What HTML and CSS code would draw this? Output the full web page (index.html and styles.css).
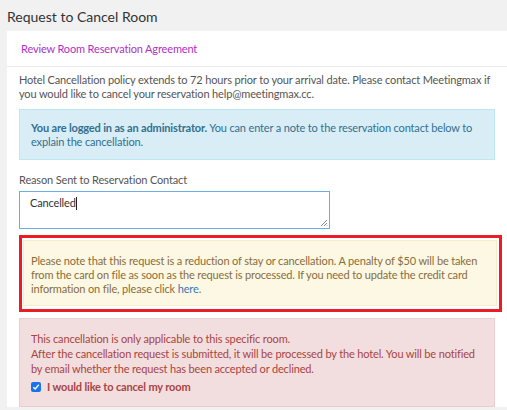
FILE: index.html
```html
<!DOCTYPE html>
<html lang="en">
<head>
<meta charset="utf-8">
<title>Request to Cancel Room</title>
<link rel="stylesheet" href="styles.css">
</head>
<body>
<div class="page">
  <h1 class="title">Request to Cancel Room</h1>
  <div class="panel">
    <div class="panel-head">
      <a class="agreement" href="#">Review Room Reservation Agreement</a>
    </div>
    <div class="panel-body">
      <p class="policy">Hotel Cancellation policy extends to 72 hours prior to your arrival date. Please contact Meetingmax if you would like to cancel your reservation help@meetingmax.cc.</p>
      <div class="alert alert-info"><strong>You are logged in as an administrator.</strong> You can enter a note to the reservation contact below to explain the cancellation.</div>
      <label class="field-label">Reason Sent to Reservation Contact</label>
      <div class="field">Cancelled<span class="caret"></span>
        <svg class="grip" width="8" height="8" viewBox="0 0 8 8"><path d="M7 1L1 7M7 4L4 7M7 6.5L6.5 7" stroke="#777" stroke-width="0.9" fill="none"/></svg>
      </div>
      <div class="highlight">
        <div class="alert alert-warning">Please note that this request is a reduction of stay or cancellation. A penalty of $50 will be taken from the card on file as soon as the request is processed. If you need to update the credit card information on file, please click <a class="here" href="#">here</a>.</div>
      </div>
      <div class="alert alert-danger">
        <p class="line">This cancellation is only applicable to this specific room.</p>
        <p class="line">After the cancellation request is submitted, it will be processed by the hotel. You will be notified by email whether the request has been accepted or declined.</p>
        <label class="confirm"><span class="check"><svg width="8" height="8" viewBox="0 0 8 8"><path d="M1.3 4.2L3.2 6L6.8 1.8" stroke="#fff" stroke-width="1.4" fill="none"/></svg></span>I would like to cancel my room</label>
      </div>
    </div>
  </div>
</div>
</body>
</html>
```
FILE: styles.css
```css
html, body {
  margin: 0;
  padding: 0;
  background: #f1f1f1;
  font-family: Lato, "Open Sans", "Liberation Sans", sans-serif;
  font-size: 11px;
  line-height: 14px;
  letter-spacing: -0.15px;
  color: #555;
}
.page {
  padding-left: 7px;
  height: 410px;
  overflow: hidden;
}
.title {
  margin: 0;
  height: 31px;
  line-height: 34px;
  font-size: 14px;
  font-weight: 400;
  letter-spacing: 0;
  color: #333;
}
.panel {
  background: #fff;
}
.panel-head {
  height: 35px;
  display: flex;
  align-items: center;
  padding: 0 13px 0 14px;
  border-bottom: 1px solid #ececec;
}
.agreement {
  color: #b030c6;
  text-decoration: none;
}
.panel-body {
  padding: 6px 12px 0 12px;
  display: flex;
  flex-direction: column;
}
.policy {
  margin: 0 0 8px;
}
.alert {
  border: 1px solid transparent;
}
.alert-info {
  background: #d9edf7;
  border-color: #bce8f1;
  color: #31708f;
  padding: 11px 11px 10px;
}
.alert-info strong {
  font-weight: 700;
}
.field-label {
  margin-top: 13px;
  margin-bottom: 4px;
}
.field {
  position: relative;
  width: 289px;
  height: 28px;
  border: 1px solid #6aaee8;
  padding: 4px 10px;
  color: #333;
}
.caret {
  display: inline-block;
  width: 1px;
  height: 13px;
  background: #222;
  vertical-align: -3px;
}
.grip {
  position: absolute;
  right: 1px;
  bottom: 1px;
}
.highlight {
  margin-top: 6px;
  margin-right: -7px;
  border: 3px solid #ed1c24;
  padding: 2px 2px 3px 1px;
}
.alert-warning {
  background: #fcf8e3;
  border-color: #faebcc;
  color: #8a6d3b;
  padding: 13px 7px 9px;
}
.here {
  color: #337ab7;
  text-decoration: none;
}
.alert-danger {
  margin-top: 6px;
  background: #f2dede;
  border-color: #ebccd1;
  color: #a94442;
  padding: 12px 11px 12px;
  line-height: 15px;
}
.line {
  margin: 0;
}
.confirm {
  display: flex;
  align-items: center;
  gap: 6px;
  font-weight: 700;
  margin-top: 4px;
  line-height: 14px;
}
.check {
  width: 10px;
  height: 10px;
  border-radius: 2px;
  background: #1a73e8;
  display: flex;
  align-items: center;
  justify-content: center;
}
```
